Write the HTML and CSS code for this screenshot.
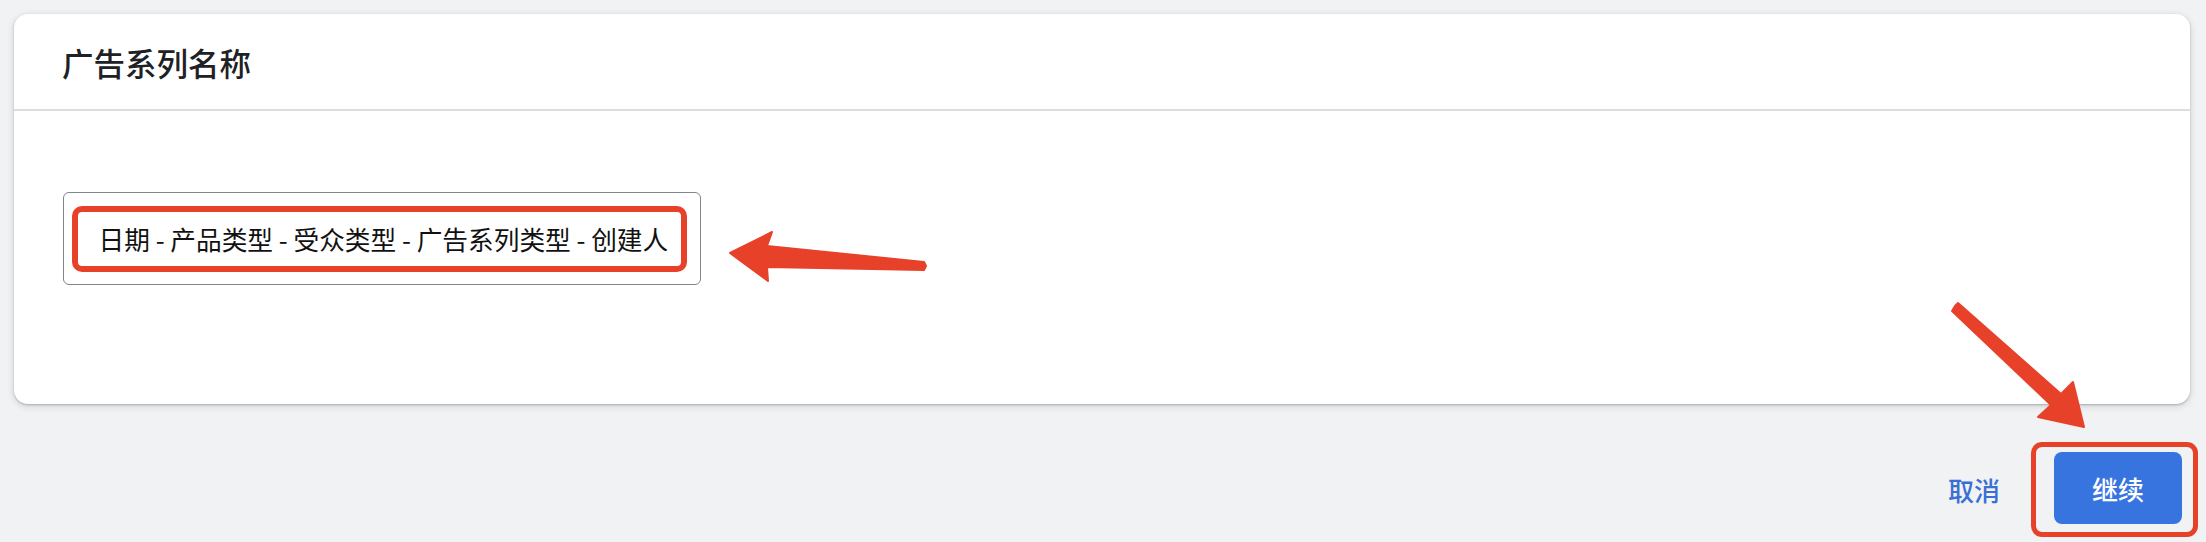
FILE: index.html
```html
<!DOCTYPE html>
<html lang="zh-CN">
<head>
    <meta charset="UTF-8">
    <meta name="viewport" content="width=device-width, initial-scale=1.0">
    <title>广告系列名称</title>
    <link rel="stylesheet" href="styles.css">
</head>
<body>
    <div class="page">
        <div class="card">
            <div class="card-header">广告系列名称</div>
            <div class="card-body">
                <div class="name-field">
                    <span class="highlight">日期 - 产品类型 - 受众类型 - 广告系列类型 - 创建人</span>
                </div>
            </div>
        </div>

        <div class="actions">
            <button class="btn-text">取消</button>
            <div class="highlight-box">
                <button class="btn-primary">继续</button>
            </div>
        </div>
    </div>

    <!-- annotation arrows drawn over the page -->
    <svg class="annotations" width="2206" height="542" viewBox="0 0 2206 542">
        <polygon fill="#e8412a" stroke="#e8412a" stroke-width="2" stroke-linejoin="round"
                 points="730,253 772,232 767,246 924,262 926,266 924,270 767,267 768,281"/>
        <polygon fill="#e8412a" stroke="#e8412a" stroke-width="2" stroke-linejoin="round"
                 points="2084,427 2038,417 2051,405 1952,311 1955,306 1958,303 2061,394 2073,382"/>
    </svg>
</body>
</html>
```

FILE: styles.css
```css
body {
    margin: 0;
    background: #f1f2f4;
    font-family: "Noto Sans CJK SC", "Noto Sans", sans-serif;
}

.page {
    padding: 14px 16px 0 14px;
}

.card {
    background: #fff;
    border-radius: 14px;
    height: 390px;
    box-shadow: 0 1px 2px rgba(60,64,67,0.3), 0 2px 6px 1px rgba(60,64,67,0.15);
}

.card-header {
    height: 95px;
    padding-left: 48px;
    display: flex;
    align-items: center;
    font-size: 31.5px;
    font-weight: 500;
    color: #202124;
    border-bottom: 2px solid #dcdde1;
}

.card-body {
    padding: 81px 49px 0 49px;
}

.name-field {
    display: inline-block;
    border: 1.5px solid #80868b;
    border-radius: 6px;
    padding: 12.5px 12.5px 12.5px 7.5px;
}

.highlight {
    display: inline-block;
    border: 6px solid #e8412a;
    border-radius: 10px;
    padding: 0 13px 0 21px;
    height: 54px;
    line-height: 54px;
    font-size: 25.7px;
    color: #111;
}

.actions {
    display: flex;
    justify-content: flex-end;
    align-items: center;
    margin-top: 38px;
    margin-right: -8px;
}

.btn-text {
    background: none;
    border: none;
    font-family: inherit;
    font-size: 26px;
    font-weight: 500;
    color: #3a6fd3;
    padding: 0;
    margin-right: 31px;
    cursor: pointer;
}

.highlight-box {
    border: 5px solid #e8412a;
    border-radius: 11px;
    padding: 5px 11px 8px 18px;
}

.btn-primary {
    display: block;
    width: 128px;
    height: 72px;
    border: none;
    border-radius: 8px;
    background: #3874e0;
    color: #fff;
    font-family: inherit;
    font-size: 26px;
    font-weight: 500;
    cursor: pointer;
}

.annotations {
    position: absolute;
    left: 0;
    top: 0;
    pointer-events: none;
}
```
